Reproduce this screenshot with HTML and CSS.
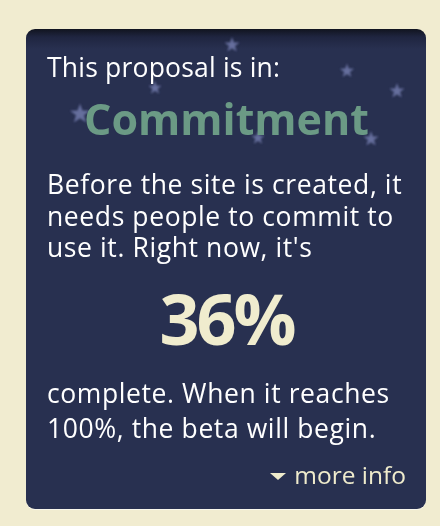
FILE: index.html
```html
<!DOCTYPE html>
<html>
<head>
<meta charset="utf-8">
<link rel="stylesheet" href="styles.css">
</head>
<body>
<div class="card">
  <svg class="stars" width="400" height="480" viewBox="0 0 400 480" aria-hidden="true">
    <defs>
      <filter id="blur" x="-50%" y="-50%" width="200%" height="200%"><feGaussianBlur stdDeviation="0.9"/></filter>
      <polygon id="star" points="0,-10 2.35,-3.24 9.51,-3.09 3.8,1.24 5.88,8.09 0,4 -5.88,8.09 -3.8,1.24 -9.51,-3.09 -2.35,-3.24"/>
    </defs>
    <g fill="#6c74a4" opacity="0.92" filter="url(#blur)">
      <use href="#star" transform="translate(206,16) scale(0.8)"/>
      <use href="#star" transform="translate(129,59) scale(0.7)"/>
      <use href="#star" transform="translate(321,42) scale(0.75)"/>
      <use href="#star" transform="translate(371,62) scale(0.8)"/>
      <use href="#star" transform="translate(54,85) scale(1.05)"/>
      <use href="#star" transform="translate(232,109) scale(0.7)"/>
      <use href="#star" transform="translate(345,110) scale(0.8)"/>
    </g>
  </svg>
  <div class="content">
    <p class="intro">This proposal is in:</p>
    <h2 class="phase">Commitment</h2>
    <p class="body first">Before the site is created, it<br>needs people to commit to<br>use it. Right now, it's</p>
    <div class="percent">36%</div>
    <p class="body second">complete. When it reaches<br>100%, the beta will begin.</p>
    <div class="more"><a class="more-link" href="#"><span class="tri"></span>more info</a></div>
  </div>
</div>
</body>
</html>
```
FILE: styles.css
```css
html, body {
  margin: 0;
  padding: 0;
}
body {
  background: #f1ecd0;
  font-family: "Open Sans", "Noto Sans", "DejaVu Sans", sans-serif;
  padding: 29px 14px 0 26px;
  height: 526px;
  box-sizing: border-box;
}
.card {
  position: relative;
  width: 400px;
  height: 480px;
  box-sizing: border-box;
  border-radius: 9px;
  background: linear-gradient(to bottom, #11141f 0px, #1f2540 8px, #283050 20px, #283050 100%);
  overflow: hidden;
  box-shadow: 0 1px 0 rgba(255,255,255,0.6);
}
.stars {
  position: absolute;
  left: 0;
  top: 0;
}
.content {
  position: relative;
  padding: 22px 20px 0 21px;
  color: #ffffff;
  white-space: nowrap;
}
.intro {
  margin: 0;
  font-size: 26.5px;
  line-height: 32px;
  letter-spacing: 0.2px;
}
.phase {
  margin: 11px 0 0;
  text-align: center;
  font-size: 43px;
  line-height: 50px;
  font-weight: 700;
  color: #6b9a85;
}
.body {
  margin: 0;
  font-size: 26.5px;
  letter-spacing: 0.6px;
}
.first {
  line-height: 31.5px;
  margin-top: 25px;
}
.second {
  line-height: 35px;
  margin-top: 23px;
}
.percent {
  text-align: center;
  font-size: 70px;
  line-height: 70px;
  letter-spacing: -3px;
  font-weight: 700;
  color: #f0ecce;
  margin-top: 19px;
}
.more {
  display: flex;
  justify-content: flex-end;
  margin-top: 14px;
}
.more-link {
  color: #efebcc;
  text-decoration: none;
  font-size: 24.5px;
  line-height: 30px;
  display: flex;
  align-items: center;
  gap: 8px;
}
.tri {
  width: 0;
  height: 0;
  border-left: 8px solid transparent;
  border-right: 8px solid transparent;
  border-top: 7px solid #efebcc;
  margin-top: 3px;
}
```
